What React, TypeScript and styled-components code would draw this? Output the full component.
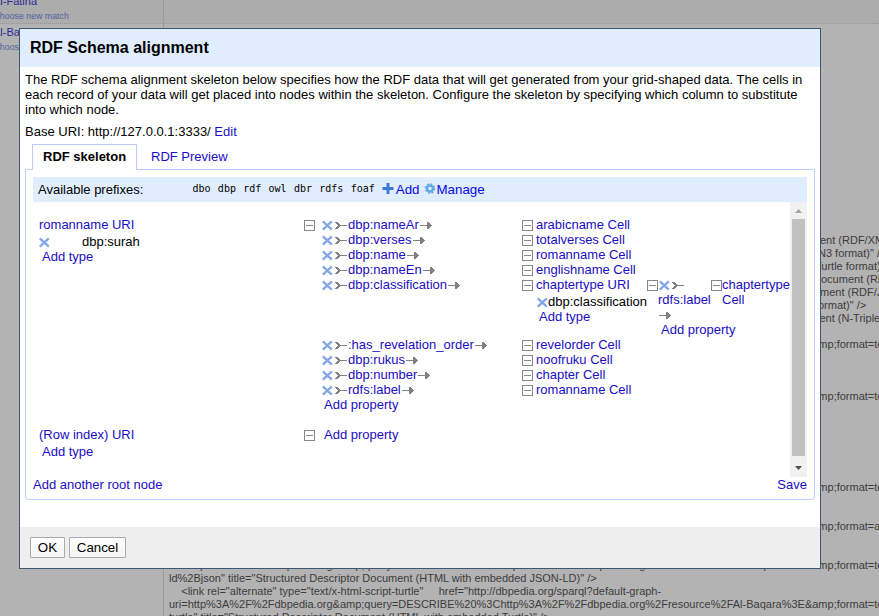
import React from "react";
import styled, { createGlobalStyle } from "styled-components";

const Global = createGlobalStyle`
  html, body { margin: 0; height: 616px; overflow: hidden; background: #b3b3b3; }
  * { box-sizing: border-box; }
  body { font: 13px/15px "Liberation Sans", Arial, sans-serif; color: #000; }
`;

/* ---------- page behind the dialog ---------- */
const Page = styled.div`
  position: relative;
  width: 879px;
  height: 616px;
  overflow: hidden;
`;
const Backdrop = styled.div`
  display: grid;
  grid-template-columns: 163px 716px;
  grid-template-rows: 24px 592px;
`;
const MatchCell = styled.div<{ $dark?: boolean }>`
  overflow: hidden;
  white-space: nowrap;
  background: ${(p) => (p.$dark ? "#acacac" : "#b3b3b3")};
  border-bottom: ${(p) => (p.$dark ? "1px dotted #999" : "none")};
`;
const MatchName = styled.div<{ $top: number }>`
  margin: ${(p) => p.$top}px 0 0 -7px;
  font-size: 11px;
  line-height: 13px;
  color: #2b2b94;
`;
const MatchHint = styled.div`
  margin: 2px 0 0 -6.5px;
  font-size: 8.8px;
  line-height: 12px;
  color: #5163a0;
`;
const SourceCell = styled.div<{ $dark?: boolean }>`
  overflow: hidden;
  white-space: pre;
  border-left: 1px solid #999;
  background: ${(p) => (p.$dark ? "#acacac" : "#b3b3b3")};
  border-bottom: ${(p) => (p.$dark ? "1px dotted #999" : "none")};
  padding: ${(p) => (p.$dark ? "0" : "210px 0 0 5px")};
  font-size: 11px;
  line-height: 13px;
  color: #3c3c3c;
`;
const SourceLine = styled.div<{ $indent?: number }>`
  height: 13px;
  padding-left: ${(p) => p.$indent ?? 0}px;
`;

/* ---------- dialog frame ---------- */
const Dialog = styled.div`
  position: absolute;
  left: 19px;
  top: 28px;
  width: 802px;
  height: 541px;
  display: flex;
  flex-direction: column;
  background: #fff;
  border: 1px solid #3a5774;
`;
const Header = styled.div`
  height: 38px;
  padding: 9px 10px;
  background: #e0edfe;
  font-size: 16px;
  line-height: 20px;
  font-weight: bold;
  white-space: nowrap;
`;
const Body = styled.div`
  flex: 1;
  padding: 5px 5px 0;
  white-space: nowrap;
`;
const Footer = styled.div`
  display: flex;
  gap: 4px;
  height: 41px;
  padding: 10px;
  background: #eee;
`;
const Button = styled.button<{ $w: number }>`
  width: ${(p) => p.$w}px;
  height: 21px;
  padding: 0;
  border: 1px solid #aaa;
  border-radius: 1px;
  background: linear-gradient(#fff, #f4f4f4);
  font: 13.33px/18px "Liberation Sans", Arial, sans-serif;
  color: #000;
`;
const Link = styled.a`
  color: #1a0dc4;
`;
const Base = styled.p`
  margin: 7px 0 5px;
`;
const Line = styled.div`
  height: 15px;
`;

/* ---------- tabs ---------- */
const Tabs = styled.div`
  display: flex;
  padding-left: 7px;
  height: 25px;
`;
const Tab = styled.div<{ $active?: boolean }>`
  height: ${(p) => (p.$active ? 26 : 25)}px;
  width: ${(p) => (p.$active ? "105px" : "auto")};
  padding: ${(p) => (p.$active ? "4px 0 0 10px" : "5px 0 0 14px")};
  border: ${(p) => (p.$active ? "1px solid #bbccff" : "none")};
  border-bottom: none;
  font-weight: ${(p) => (p.$active ? "bold" : "normal")};
  background: ${(p) => (p.$active ? "#fff" : "transparent")};
  z-index: 1;
`;
const Panel = styled.div`
  width: 790px;
  height: 331px;
  padding: 7px;
  border: 1px solid #bbccff;
  border-radius: 0 0 4px 4px;
`;
const PrefixBar = styled.div`
  display: flex;
  height: 25px;
  padding: 5px 0 0 5px;
  background: #e0edfe;
`;
const PrefixLabel = styled.div`
  width: 154.5px;
`;
const Prefixes = styled.div`
  display: flex;
  gap: 7.3px;
  font: 10px/14px "DejaVu Sans Mono", monospace;
`;
const PrefixAction = styled.div<{ $gap: number }>`
  display: flex;
  margin-left: ${(p) => p.$gap}px;
  font-size: 13.33px;
  a { color: #0808e8; }
`;

/* ---------- skeleton tree ---------- */
const Viewport = styled.div`
  display: flex;
  height: 275px;
`;
const Tree = styled.div`
  width: 757px;
  padding-top: 15px;
  overflow: hidden;
`;
const Root = styled.div<{ $h: number }>`
  display: grid;
  grid-template-columns: 271px 18px 1fr;
  height: ${(p) => p.$h}px;
`;
const RootNode = styled.div`
  padding-left: 6px;
`;
const TypeRow = styled.div<{ $gap?: number }>`
  display: flex;
  gap: ${(p) => p.$gap ?? 0}px;
  margin-top: 2px;
`;
const Indent = styled.div<{ $x: number }>`
  padding-left: ${(p) => p.$x}px;
`;
const PropertyRow = styled.div<{ $tall?: boolean }>`
  display: grid;
  grid-template-columns: 200px 125px 1fr;
  height: ${(p) => (p.$tall ? 60 : 15)}px;
`;
const PropertyCell = styled.div`
  display: flex;
  height: 15px;
`;
const NodeCell = styled.div`
  display: flex;
  height: 15px;
  gap: 3px;
`;
const SubTree = styled.div`
  display: grid;
  grid-template-columns: 11px 53px 11px 1fr;
`;
const SubIcons = styled.div`
  display: flex;
  height: 15px;
  padding-left: 1px;
`;
const Bottom = styled.div`
  display: flex;
  justify-content: space-between;
`;

/* ---------- scrollbar ---------- */
const ScrollTrack = styled.div`
  display: flex;
  flex-direction: column;
  align-items: center;
  width: 17px;
  height: 275px;
  background: #f1f1f1;
`;
const ScrollThumb = styled.div`
  width: 13px;
  height: 237px;
  background: #c1c1c1;
`;
const Glyph = styled.svg`
  display: block;
  flex: none;
`;

const Toggle = () => (
  <Glyph width="11" height="15" shapeRendering="crispEdges">
    <path d="M.5 3.5h10v10h-10zM2 8.5h7" fill="none" stroke="#888" />
  </Glyph>
);
const Remove = () => (
  <Glyph width="11" height="15">
    <path d="M.8 4.3l9 8.4M9.8 4.3l-9 8.4" fill="none" stroke="#84a6ea" strokeWidth="2.3" />
  </Glyph>
);
const Tail = () => (
  <Glyph width="15" height="15" shapeRendering="crispEdges">
    <path d="M2 5h3v1h1v1h1v1h7v1h-7v1h-1v1h-1v1h-3v-1h1v-1h1v-1h1v-1h-1v-1h-1v-1h-1z" fill="#808080" />
  </Glyph>
);
const Head = () => (
  <Glyph width="14" height="15" shapeRendering="crispEdges">
    <path d="M1 8h7v-3h2v1h1v1h1v1h1v1h-1v1h-1v1h-1v1h-2v-3h-7z" fill="#808080" />
  </Glyph>
);
const Plus = () => (
  <Glyph width="14" height="15">
    <path d="M4.5 1h3v4h4v3h-4v4h-3v-4h-4v-3h4z" fill="#3b78d8" />
  </Glyph>
);
const Gear = () => (
  <Glyph width="13" height="15">
    <circle cx="6" cy="6.5" r="4.6" fill="none" stroke="#62a9e0" strokeWidth="1.6" strokeDasharray="1.8 1.8" />
    <circle cx="6" cy="6.5" r="3" fill="none" stroke="#62a9e0" strokeWidth="2.4" />
  </Glyph>
);

const SOURCE =
  "uri=http%3A%2F%2Fdbpedia.org&amp;query=DESCRIBE%20%3Chttp%3A%2F%2Fdbpedia.org%2Fresource%2FAl-Baqara%3E&amp;format=text";

const sourceLines: { text?: string; indent?: number }[] = [
  { text: "ent (RDF/XML)", indent: 651 },
  { text: "N3 format)\" />", indent: 649 },
  { text: "Turtle format)\"", indent: 646 },
  { text: "ocument (RDF", indent: 652 },
  { text: "ment (RDF/JSON", indent: 651 },
  { text: "ormat)\" />", indent: 649 },
  { text: "ent (N-Triples", indent: 650.5 },
  {},
  { text: SOURCE },
  {}, {}, {},
  { text: SOURCE },
  {}, {}, {}, {}, {}, {},
  { text: SOURCE },
  {}, {},
  { text: SOURCE.replace("format=text", "format=application") },
  {}, {},
  { text: SOURCE },
  { text: "ld%2Bjson\" title=\"Structured Descriptor Document (HTML with embedded JSON-LD)\" />" },
  { text: "    <link rel=\"alternate\" type=\"text/x-html-script-turtle\"     href=\"http://dbpedia.org/sparql?default-graph-" },
  { text: SOURCE },
  { text: "turtle\" title=\"Structured Descriptor Document (HTML with embedded Turtle)\" />" },
];

const prefixes = ["dbo", "dbp", "rdf", "owl", "dbr", "rdfs", "foaf"];
const upper = [
  ["dbp:nameAr", "arabicname Cell"],
  ["dbp:verses", "totalverses Cell"],
  ["dbp:name", "romanname Cell"],
  ["dbp:nameEn", "englishname Cell"],
];
const lower = [
  [":has_revelation_order", "revelorder Cell"],
  ["dbp:rukus", "noofruku Cell"],
  ["dbp:number", "chapter Cell"],
  ["rdfs:label", "romanname Cell"],
];

const Property = ({ name }: { name: string }) => (
  <PropertyCell>
    <Remove />
    <Tail />
    <Link>{name}</Link>
    <Head />
  </PropertyCell>
);
const Row = ({ data }: { data: string[] }) => (
  <PropertyRow>
    <Property name={data[0]} />
    <NodeCell>
      <Toggle />
      <Link>{data[1]}</Link>
    </NodeCell>
  </PropertyRow>
);

export default function App() {
  return (
    <Page>
      <Global />
      <Backdrop>
        <MatchCell $dark>
          <MatchName $top={-5}>Al-Fatiha</MatchName>
          <MatchHint>Choose new match</MatchHint>
        </MatchCell>
        <SourceCell $dark />
        <MatchCell>
          <MatchName $top={2}>Al-Baqara</MatchName>
          <MatchHint>Choose new match</MatchHint>
        </MatchCell>
        <SourceCell>
          {sourceLines.map((l, i) => (
            <SourceLine key={i} $indent={l.indent}>{l.text}</SourceLine>
          ))}
        </SourceCell>
      </Backdrop>

      <Dialog>
        <Header>RDF Schema alignment</Header>
        <Body>
          <Line>The RDF schema alignment skeleton below specifies how the RDF data that will get generated from your grid-shaped data. The cells in</Line>
          <Line>each record of your data will get placed into nodes within the skeleton. Configure the skeleton by specifying which column to substitute</Line>
          <Line>into which node.</Line>
          <Base>Base URI: http://127.0.0.1:3333/ <Link>Edit</Link></Base>
          <Tabs>
            <Tab $active>RDF skeleton</Tab>
            <Tab><Link>RDF Preview</Link></Tab>
          </Tabs>
          <Panel>
            <PrefixBar>
              <PrefixLabel>Available prefixes:</PrefixLabel>
              <Prefixes>{prefixes.map((p) => <span key={p}>{p}</span>)}</Prefixes>
              <PrefixAction $gap={7}><Plus /><Link>Add</Link></PrefixAction>
              <PrefixAction $gap={4}><Gear /><Link>Manage</Link></PrefixAction>
            </PrefixBar>
            <Viewport>
              <Tree>
                <Root $h={210}>
                  <RootNode>
                    <Link>romanname URI</Link>
                    <TypeRow $gap={32}><Remove /><span>dbp:surah</span></TypeRow>
                    <Indent $x={3}><Link>Add type</Link></Indent>
                  </RootNode>
                  <Toggle />
                  <div>
                    {upper.map((d) => <Row key={d[0]} data={d} />)}
                    <PropertyRow $tall>
                      <Property name="dbp:classification" />
                      <div>
                        <NodeCell><Toggle /><Link>chaptertype URI</Link></NodeCell>
                        <Indent $x={15}>
                          <TypeRow><Remove /><span>dbp:classification</span></TypeRow>
                          <Indent $x={2}><Link>Add type</Link></Indent>
                        </Indent>
                      </div>
                      <SubTree>
                        <Toggle />
                        <div>
                          <SubIcons><Remove /><Tail /></SubIcons>
                          <Link>rdfs:label</Link>
                          <Head />
                          <Indent $x={3}><Link>Add property</Link></Indent>
                        </div>
                        <Toggle />
                        <div><Link>chaptertype</Link><br /><Link>Cell</Link></div>
                      </SubTree>
                    </PropertyRow>
                    {lower.map((d) => <Row key={d[0]} data={d} />)}
                    <Indent $x={2}><Link>Add property</Link></Indent>
                  </div>
                </Root>
                <Root $h={40}>
                  <RootNode>
                    <Link>(Row index) URI</Link>
                    <Indent $x={3}><TypeRow><Link>Add type</Link></TypeRow></Indent>
                  </RootNode>
                  <Toggle />
                  <Indent $x={2}><Link>Add property</Link></Indent>
                </Root>
              </Tree>
              <ScrollTrack>
                <Glyph width="17" height="17"><path d="M5 11l3.5-4 3.5 4z" fill="#a3a3a3" /></Glyph>
                <ScrollThumb />
                <Glyph width="17" height="21"><path d="M5 10l3.5 4 3.5-4z" fill="#505050" /></Glyph>
              </ScrollTrack>
            </Viewport>
            <Bottom>
              <Link>Add another root node</Link>
              <Link>Save</Link>
            </Bottom>
          </Panel>
        </Body>
        <Footer>
          <Button $w={35}>OK</Button>
          <Button $w={57}>Cancel</Button>
        </Footer>
      </Dialog>
    </Page>
  );
}
